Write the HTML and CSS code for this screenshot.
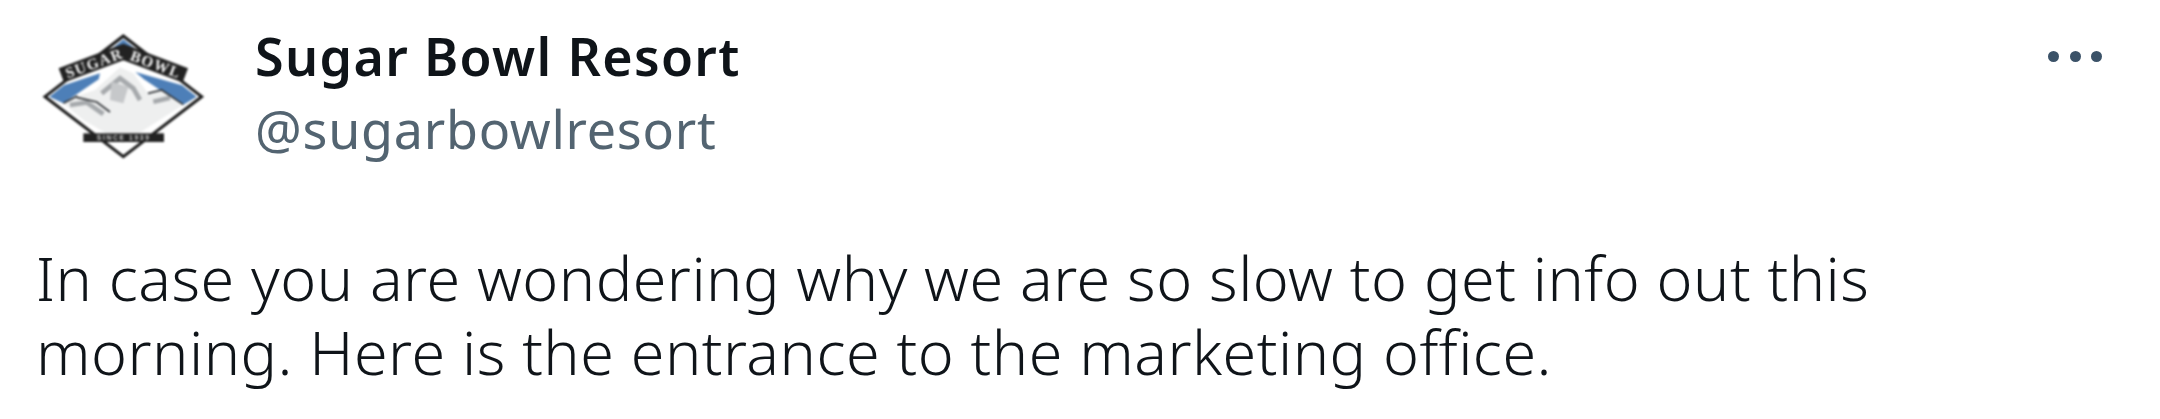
FILE: index.html
```html
<!DOCTYPE html>
<html lang="en">
<head>
    <meta charset="UTF-8">
    <title>Sugar Bowl Resort</title>
    <link rel="stylesheet" href="styles.css">
</head>
<body>
<div class="tweet">
    <div class="head">
        <div class="avatar">
            <svg width="200" height="170" viewBox="0 0 600 510">
                <!-- diamond -->
                <polygon points="310,78 545,260 310,440 75,260" fill="#fff" stroke="#1a1a1a" stroke-width="9"/>
                <!-- blue sky -->
                <polygon points="310,88 360,128 262,128" fill="#4d7fb8"/>
                <polygon points="88,260 132,226 240,190 236,208 130,280" fill="#4d7fb8"/>
                <polygon points="530,260 486,226 346,186 372,208 420,240 490,284" fill="#4d7fb8"/>
                <!-- mountain -->
                <polygon points="130,280 172,258 225,240 300,172 340,190 384,250 425,240 490,284 310,400 190,330" fill="#eeefef"/>
                <path d="M245 250l55-45 40 30 20 35M150 285l50-8 50 35M400 275l50-12" fill="none" stroke="#a6a9ac" stroke-width="14"/>
                <path d="M275 215l50 15-15 50-40-10z" fill="#c6c8ca"/>
                <path d="M130 280l42-22M384 250l41-10 65 44M170 262l60 14 40 30" fill="none" stroke="#33363a" stroke-width="5"/>
                <!-- banner -->
                <path d="M124 196L310 126L496 196" fill="none" stroke="#222" stroke-width="46"/>
                <path id="arc" d="M124 213L310 143L496 213" fill="none"/>
                <text class="logo-arc"><textPath href="#arc" startOffset="50%" text-anchor="middle">SUGAR BOWL</textPath></text>
                <rect x="190" y="370" width="242" height="26" fill="#222"/>
                <text class="logo-since" x="311" y="390" text-anchor="middle">SINCE 1939</text>
            </svg>
        </div>
        <div class="names">
            <div class="name">Sugar Bowl Resort</div>
            <div class="handle">@sugarbowlresort</div>
        </div>
        <div class="more">
            <span></span><span></span><span></span>
        </div>
    </div>
    <p class="text">In case you are wondering why we are so slow to get info out this<br>morning. Here is the entrance to the marketing office.</p>
</div>
</body>
</html>
```
FILE: styles.css
```css
*{
    padding: 0;
    margin: 0;
}
body{
    background: #fff;
    font-family: "Noto Sans", "Liberation Sans", sans-serif;
}
.tweet{
    width: 2160px;
    height: 419px;
    padding: 10px 0 0 20px;
    box-sizing: border-box;
    overflow: hidden;
    filter: blur(0.5px);
}
.head{
    display: flex;
    align-items: flex-start;
}
.avatar{
    width: 200px;
    height: 170px;
    margin-right: 35px;
    filter: blur(1px);
}
.logo-arc{
    font: bold 46px "Liberation Serif", serif;
    fill: #f2f2f2;
    letter-spacing: 4px;
}
.logo-since{
    font: bold 20px "Liberation Sans", sans-serif;
    fill: #ccc;
    letter-spacing: 5px;
}
.names{
    flex: 1;
    margin-top: 11px;
}
.name{
    font-size: 52px;
    line-height: 70px;
    font-weight: 600;
    letter-spacing: 1.35px;
    color: #0f1419;
}
.handle{
    font-size: 52px;
    line-height: 76px;
    letter-spacing: 0.75px;
    color: #536471;
}
.more{
    display: flex;
    gap: 10.5px;
    margin: 41px 58px 0 0;
}
.more span{
    width: 11px;
    height: 11px;
    border-radius: 50%;
    background: #3b5268;
}
.text{
    margin: 61px 0 0 16px;
    font-size: 61px;
    line-height: 74px;
    letter-spacing: 0.5px;
    color: #0f1419;
    font-weight: 300;
}
```
